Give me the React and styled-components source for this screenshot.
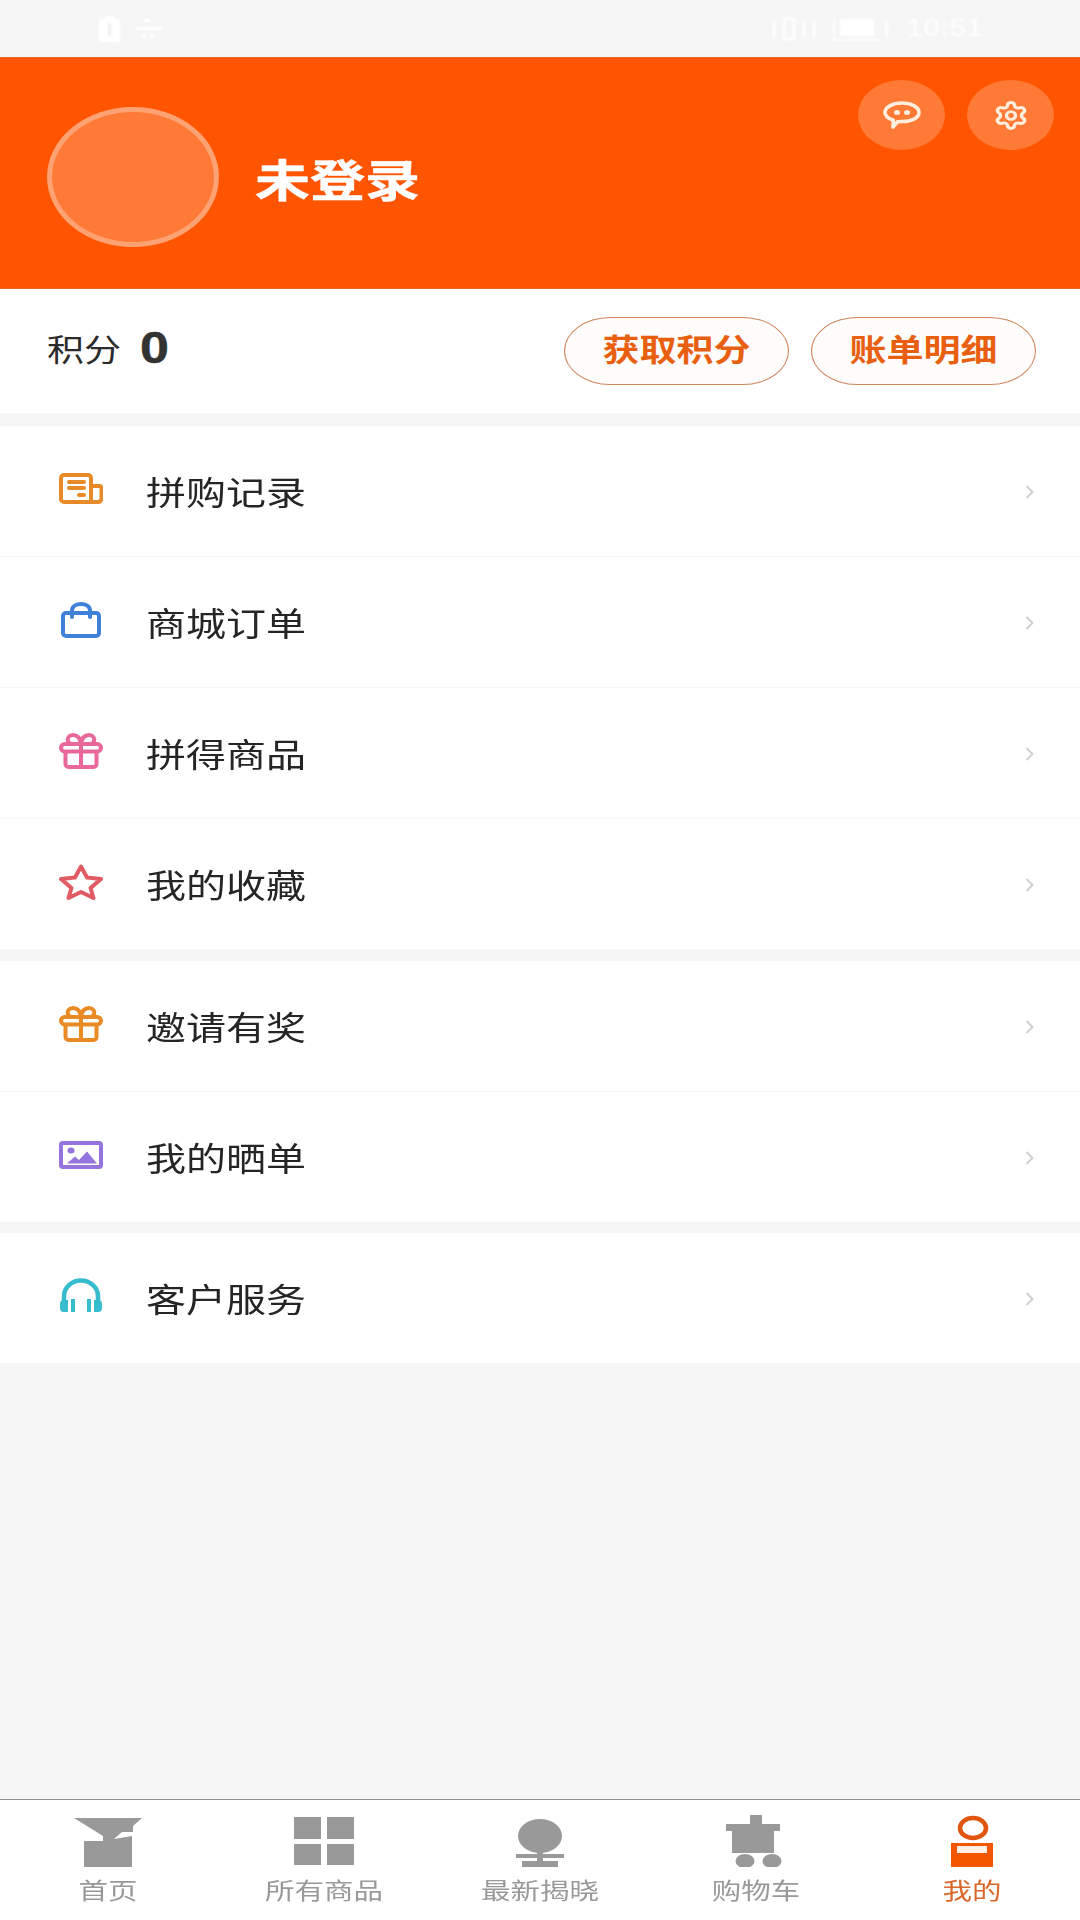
import React from "react";
import styled, { createGlobalStyle } from "styled-components";
import { Settings } from "lucide-react";

const Global = createGlobalStyle`
  html, body { margin: 0; padding: 0; background: #f5f5f5; }
  * { box-sizing: border-box; }
`;
const FONT = `"Noto Sans CJK SC", "Noto Sans", sans-serif`;

const Page = styled.div`
  width: 1080px; height: 1920px; display: flex; flex-direction: column;
  background: #f5f5f5; font-family: ${FONT}; overflow: hidden;
`;
const StatusBar = styled.div`
  height: 57px; display: flex; align-items: center; justify-content: space-between;
  padding: 0 96px 0 97px; color: #fff; filter: blur(0.8px);
`;
const StatusGroup = styled.div`display: flex; align-items: center; gap: 14px;`;
const Clock = styled.span`
  font: 400 29px "Liberation Sans", sans-serif; letter-spacing: 1px;
  display: inline-block; transform: scaleY(0.8);
`;
const Header = styled.header`
  height: 232px; background: #ff5500; display: flex; align-items: flex-start;
  padding: 22px 26px 0 47px; border-top: 1px solid #ee6a22; border-bottom: 1px solid #e8691f;
`;
const Profile = styled.div`display: flex; align-items: center; gap: 36px; margin-top: 27px;`;
const Avatar = styled.div`
  width: 172px; height: 140px; border-radius: 50%;
  background: #ff7a36; border: 5px solid #ffa273;
`;
const UserName = styled.div`
  font-size: 55px; font-weight: 700; line-height: 60px; color: #fff;
  transform: translateY(1px) scaleY(0.8); -webkit-text-stroke: 0.6px #fff;
`;
const Actions = styled.div`margin-left: auto; display: flex; gap: 22px;`;
const RoundButton = styled.button`
  width: 87px; height: 70px; border: 0; padding: 0; border-radius: 50%;
  background: #ff7a36; display: flex; align-items: center; justify-content: center;
`;
const PointsRow = styled.section`
  height: 124px; background: #fff; display: flex; align-items: center;
  padding: 0 44px 0 47px;
`;
const PointsLabel = styled.span`
  font-size: 37px; color: #2b2b2b; line-height: 40px; transform: translateY(-3px) scaleY(0.82);
`;
const PointsValue = styled.span`
  font: 700 52px/60px "Liberation Sans", sans-serif; color: #333;
  transform: translateY(-3px) scaleY(0.84); margin-left: 19px; -webkit-text-stroke: 0.6px #333;
`;
const PointsActions = styled.div`margin-left: auto; display: flex; gap: 22px;`;
const Pill = styled.button`
  width: 225px; height: 68px; background: #fffdfb; border: 1.5px solid #cf845a;
  border-radius: 46px / 34px; padding: 0; font-family: ${FONT};
  display: flex; align-items: center; justify-content: center;
`;
const PillText = styled.span`
  font-size: 37px; font-weight: 700; line-height: 44px; color: #e8600f;
  transform: translateY(-3px) scaleY(0.82);
`;
const Section = styled.section`
  margin-top: ${(p) => p.$gap}px; background: #fff; display: flex; flex-direction: column;
`;
const Row = styled.div`
  height: 131px; display: flex; align-items: center; padding: 0 45px 0 59px;
  border-bottom: 1px solid #f6f6f6;
  &:last-child { height: 130px; border-bottom: 0; }
`;
const IconSlot = styled.div`
  width: 44px; height: 40px; display: flex; align-items: center; justify-content: center;
  margin-top: -4px;
`;
const RowLabel = styled.span`
  margin-left: 43px; font-size: 40px; line-height: 48px; color: #252525;
  transform: scaleY(0.82);
`;
const Chevron = styled.svg`margin-left: auto; display: block; margin-top: 2px;`;
const TabBar = styled.nav`
  margin-top: auto; height: 121px; background: #fff; border-top: 1.5px solid #8f8f8f;
  display: grid; grid-template-columns: repeat(5, 1fr);
`;
const Tab = styled.div`
  display: flex; flex-direction: column; align-items: center; padding-top: 15px;
`;
const TabLabel = styled.span`
  font-size: 29.5px; line-height: 44px; height: 44px; white-space: nowrap;
  color: ${(p) => (p.$active ? "#d9662a" : "#999")};
  transform: scaleY(0.78);
`;

const line = { fill: "none", strokeWidth: 4, strokeLinecap: "round", strokeLinejoin: "round" };

const Receipt = () => (
  <svg width="44" height="32" viewBox="0 0 44 32">
    <g {...line} stroke="#e68b27">
      <path d="M32 27V5a3 3 0 0 0-3-3H5a3 3 0 0 0-3 3v21a3 3 0 0 0 3 3h34a3.500 3.500 0 0 0 3.500-3.500V15a2 2 0 0 0-2-2H32" />
      <path d="M10 9h15" />
      <path d="M10 15h15" />
      <path d="M20 22h5" />
    </g>
  </svg>
);
const Bag = () => (
  <svg width="40" height="36" viewBox="0 0 40 36">
    <g {...line} stroke="#3f80d8">
      <rect x="2" y="11" width="36" height="23" rx="3" />
      <path d="M11 15v-7c1-8 17-8 18 0v7" />
    </g>
  </svg>
);
const Gift = ({ c }) => (
  <svg width="44" height="36" viewBox="0 0 44 36">
    <g {...line} stroke={c}>
      <rect x="2" y="11" width="40" height="7.500" rx="3.700" />
      <path d="M6.500 19v12a3 3 0 0 0 3 3h25a3 3 0 0 0 3-3V19" />
      <path d="M22 11v23" />
      <path d="M22 11c-1-7-4-9-8-9s-6 3-5 6 3 3 6 3h7" />
      <path d="M22 11c1-7 4-9 8-9s6 3 5 6-3 3-6 3h-7" />
    </g>
  </svg>
);
const Star = () => (
  <svg width="44" height="36" viewBox="0 0 44 36">
    <path {...line} stroke="#e25a63" d="M22 2.500L28 13.500 42 15 31.500 24 34.500 34 22 28 9.500 34 12.500 24 2 15 16 13.500Z" />
  </svg>
);
const Picture = () => (
  <svg width="44" height="28" viewBox="0 0 44 28">
    <rect {...line} stroke="#9574de" x="2" y="2" width="40" height="24" rx="2" />
    <ellipse cx="12" cy="9.500" rx="3.500" ry="3" fill="#9574de" />
    <path d="M8 22.500l8-7 4 3.500 8-8.500 10 12z" fill="#9574de" />
  </svg>
);
const Headset = () => (
  <svg width="44" height="36" viewBox="0 0 44 36">
    <path {...line} strokeWidth="4.500" stroke="#36bccd" d="M5 24v-6a17 15.500 0 0 1 34 0v6" />
    <path d="M1 26a4 4 0 0 1 4-4h4v12H5a4 4 0 0 1-4-4zM43 26a4 4 0 0 0-4-4h-4v12h4a4 4 0 0 0 4-4z" fill="#36bccd" />
    <path d="M12 21h4v13h-4zM28 21h4v13h-4z" fill="#36bccd" />
  </svg>
);
const ChatIcon = () => (
  <svg width="38" height="28" viewBox="0 0 38 28">
    <path fill="none" stroke="#ffeedd" strokeWidth="3.600" strokeLinejoin="round" d="M19 2c9 0 17 3.800 17 9.500S28.500 20.500 19 20.500c-2 0-3 0-4.500 .3L10 26l.3-6.800C5 17.500 2 15 2 11.500 2 5.800 10 2 19 2z" />
    <ellipse cx="14" cy="11.500" rx="3" ry="2.500" fill="#ffeedd" />
    <ellipse cx="24" cy="11.500" rx="3" ry="2.500" fill="#ffeedd" />
  </svg>
);

const Grey = "#999";
const HomeIcon = () => (
  <svg width="68" height="52" viewBox="0 0 68 52">
    <path fill={Grey} d="M0 3H68L59 11V17H48L40 24 58 21V52H10V26H29V21Z" />
  </svg>
);
const GridIcon = () => (
  <svg width="68" height="52" viewBox="0 0 68 52">
    <path fill={Grey} d="M4 2h27v22H4zM37 2h27v22H37zM4 29h27v21H4zM37 29h27v21H37z" />
  </svg>
);
const RevealIcon = () => (
  <svg width="68" height="52" viewBox="0 0 68 52">
    <ellipse cx="34" cy="21" rx="22" ry="17" fill={Grey} />
    <path fill={Grey} d="M10 39h48v4H10zM16 46h36v6H16zM31 34h6v14h-6z" />
  </svg>
);
const CartIcon = () => (
  <svg width="68" height="52" viewBox="0 0 68 52">
    <path fill={Grey} d="M28 0h12v9h18v7h-6v22H10V16H4V9h24z" />
    <ellipse cx="23" cy="46" rx="9.500" ry="7" fill={Grey} />
    <ellipse cx="50" cy="46" rx="9.500" ry="7" fill={Grey} />
  </svg>
);
const UserIcon = () => (
  <svg width="68" height="52" viewBox="0 0 68 52">
    <ellipse cx="35" cy="13" rx="13" ry="10" fill="none" stroke="#e0560f" strokeWidth="4.500" />
    <rect x="13" y="28" width="42" height="24" fill="#f25700" />
    <rect x="19" y="31" width="30" height="7" fill="#fff0e4" />
  </svg>
);

const groups = [
  { gap: 13, items: [[<Receipt />, "拼购记录"], [<Bag />, "商城订单"], [<Gift c="#e8689a" />, "拼得商品"], [<Star />, "我的收藏"]] },
  { gap: 12, items: [[<Gift c="#e98a24" />, "邀请有奖"], [<Picture />, "我的晒单"]] },
  { gap: 11, items: [[<Headset />, "客户服务"]] },
];
const tabs = [
  [<HomeIcon />, "首页"],
  [<GridIcon />, "所有商品"],
  [<RevealIcon />, "最新揭晓"],
  [<CartIcon />, "购物车"],
  [<UserIcon />, "我的", true],
];

export default function App() {
  return (
    <Page>
      <Global />
      <StatusBar>
        <StatusGroup>
          <svg width="25" height="26" viewBox="0 0 25 26">
            <path fill="#fff" d="M4 3h4V0h9v3h4a2 2 0 0 1 2 2v19a2 2 0 0 1-2 2H4a2 2 0 0 1-2-2V5a2 2 0 0 1 2-2z" />
            <path fill="#eee" d="M11 7h3v13h-3z" />
          </svg>
          <svg width="28" height="20" viewBox="0 0 28 20">
            <path fill="#fff" d="M8 0h6v3H8zM0 8h26v3H0zM6 15h4v4H6zM14 15h4v4h-4z" />
          </svg>
        </StatusGroup>
        <StatusGroup>
          <svg width="46" height="28" viewBox="0 0 46 28">
            <path fill="none" stroke="#fff" strokeWidth="2.500" d="M2 5v18M12 4h10v20H12zM32 5v18M42 5v18" />
          </svg>
          <svg width="60" height="28" viewBox="0 0 60 28">
            <path fill="none" stroke="#fff" strokeWidth="2" d="M2 3v22h46" />
            <rect x="8" y="4" width="34" height="17" fill="#fff" />
            <path fill="#fff" d="M53 6h3v16h-3z" />
          </svg>
          <Clock>10:51</Clock>
        </StatusGroup>
      </StatusBar>

      <Header>
        <Profile>
          <Avatar />
          <UserName>未登录</UserName>
        </Profile>
        <Actions>
          <RoundButton><ChatIcon /></RoundButton>
          <RoundButton>
            <Settings width={36} height={31} color="#ffeedd" strokeWidth={2.300} preserveAspectRatio="none" />
          </RoundButton>
        </Actions>
      </Header>

      <PointsRow>
        <PointsLabel>积分</PointsLabel>
        <PointsValue>0</PointsValue>
        <PointsActions>
          <Pill><PillText>获取积分</PillText></Pill>
          <Pill><PillText>账单明细</PillText></Pill>
        </PointsActions>
      </PointsRow>

      {groups.map((g, i) => (
        <Section key={i} $gap={g.gap}>
          {g.items.map(([icon, label]) => (
            <Row key={label}>
              <IconSlot>{icon}</IconSlot>
              <RowLabel>{label}</RowLabel>
              <Chevron width="11" height="22" viewBox="0 0 11 22">
                <path d="M2.500 5l6 6-6 6" fill="none" stroke="#d0d0d0" strokeWidth="2" />
              </Chevron>
            </Row>
          ))}
        </Section>
      ))}

      <TabBar>
        {tabs.map(([icon, label, active]) => (
          <Tab key={label}>
            {icon}
            <TabLabel $active={active}>{label}</TabLabel>
          </Tab>
        ))}
      </TabBar>
    </Page>
  );
}
